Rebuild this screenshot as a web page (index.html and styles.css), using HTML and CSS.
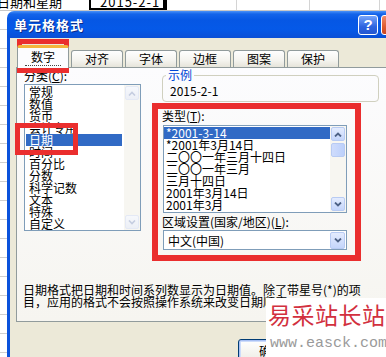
FILE: index.html
```html
<!DOCTYPE html>
<html lang="zh-CN">
<head>
<meta charset="utf-8">
<title>单元格格式</title>
<link rel="stylesheet" href="styles.css">
</head>
<body>
<div class="sheet-row">
  <div class="cell c1"><span>日期和星期</span></div>
  <div class="cell c2"><span>2015-2-1</span></div>
  <div class="cell c3"></div>
  <div class="cell c4"></div>
  <div class="cell c5"></div>
  <div class="cell c6"></div>
</div>
<div class="sheet-body">
  <div class="gutter"></div>
  <div class="dialog">
    <div class="titlebar">
      <span class="title">单元格格式</span>
      <span class="tb-help">?</span>
      <span class="tb-close"></span>
    </div>
    <div class="dlg-body">
      <div class="tabs">
        <div class="tab active"><span class="focus">数字</span></div>
        <div class="tab">对齐</div>
        <div class="tab">字体</div>
        <div class="tab">边框</div>
        <div class="tab">图案</div>
        <div class="tab">保护</div>
      </div>
      <div class="panel">
        <div class="panel-main">
          <div class="col-left">
            <div class="lbl">分类(<u>C</u>):</div>
            <div class="listbox cat">
              <ul class="items">
                <li>常规</li>
                <li>数值</li>
                <li>货币</li>
                <li>会计专用</li>
                <li class="sel">日期</li>
                <li>时间</li>
                <li>百分比</li>
                <li>分数</li>
                <li>科学记数</li>
                <li>文本</li>
                <li>特殊</li>
                <li>自定义</li>
              </ul>
              <div class="vscroll disabled">
                <span class="sbtn"><svg width="8" height="5" viewBox="0 0 8 5"><path d="M1 4.5L4 1.5L7 4.5" fill="none" stroke-width="1.6"/></svg></span>
                <span class="track"></span>
                <span class="sbtn"><svg width="8" height="5" viewBox="0 0 8 5"><path d="M1 0.5L4 3.5L7 0.5" fill="none" stroke-width="1.6"/></svg></span>
              </div>
            </div>
          </div>
          <div class="col-right">
            <fieldset class="sample">
              <legend>示例</legend>
              <div class="sample-val">2015-2-1</div>
            </fieldset>
            <div class="lbl lbl-type">类型(<u>T</u>):</div>
            <div class="listbox type">
              <ul class="items">
                <li class="sel">*2001-3-14</li>
                <li>*2001年3月14日</li>
                <li>二〇〇一年三月十四日</li>
                <li>二〇〇一年三月</li>
                <li>三月十四日</li>
                <li>2001年3月14日</li>
                <li>2001年3月</li>
              </ul>
              <div class="vscroll">
                <span class="sbtn"><svg width="8" height="5" viewBox="0 0 8 5"><path d="M1 4.5L4 1.5L7 4.5" fill="none" stroke-width="1.8"/></svg></span>
                <span class="thumb"></span>
                <span class="track"></span>
                <span class="sbtn"><svg width="8" height="5" viewBox="0 0 8 5"><path d="M1 0.5L4 3.5L7 0.5" fill="none" stroke-width="1.8"/></svg></span>
              </div>
            </div>
            <div class="lbl lbl-locale">区域设置(国家/地区)(<u>L</u>):</div>
            <div class="combo">
              <span class="combo-text">中文(中国)</span>
              <span class="sbtn"><svg width="8" height="5" viewBox="0 0 8 5"><path d="M1 0.5L4 3.5L7 0.5" fill="none" stroke-width="1.8"/></svg></span>
            </div>
          </div>
        </div>
        <p class="desc">日期格式把日期和时间系列数显示为日期值。除了带星号(*)的项<br>目，应用的格式不会按照操作系统来改变日期顺序。</p>
      </div>
      <div class="buttons">
        <button class="btn default">确定</button>
        <button class="btn">取消</button>
      </div>
    </div>
  </div>
</div>

<div class="mark m-tab"></div>
<div class="mark m-date"></div>
<div class="mark m-type"></div>

<div class="watermark">
  <div class="wm-cn">易采站长站</div>
  <div class="wm-en">www.easck.com</div>
</div>
</body>
</html>
```
FILE: styles.css
```css
* { box-sizing: border-box; }
html, body { margin: 0; padding: 0; }
body {
  width: 386px;
  height: 357px;
  overflow: hidden;
  position: relative;
  background: #fff;
  font-family: "Noto Sans CJK SC", "Liberation Sans", sans-serif;
  font-size: 12px;
  color: #000;
}

/* spreadsheet behind the dialog */
.sheet-row {
  display: flex;
  height: 11px;
  border-bottom: 1px solid #c8c8c8;
  overflow: hidden;
}
.cell {
  flex: none;
  height: 10px;
  border-right: 1px solid #d4d4d4;
  overflow: hidden;
  white-space: nowrap;
}
.cell span { display: block; line-height: 14px; margin-top: -5px; }
.c1 { width: 89px; border-right: none; font-size: 13px; }
.c1 span { margin-left: -3px; }
.c2 {
  width: 78px;
  border: 2px solid #000;
  border-top: none;
  border-right-width: 4px;
  font-size: 13px;
}
.c2 span { padding-left: 9px; letter-spacing: 1px; }
.c3 { width: 70px; }
.c4 { width: 73px; }
.c5 { width: 70px; }
.c6 { flex: 1; border-right: none; }

.sheet-body { display: flex; height: 346px; }
.gutter {
  width: 7px;
  flex: none;
  background: repeating-linear-gradient(to bottom, #fff 0 18px, #cfcfcf 18px 19px);
}

/* dialog */
.dialog { width: 400px; flex: none; }
.titlebar {
  height: 27px;
  display: flex;
  align-items: center;
  padding: 0 5px 0 7px;
  border-radius: 7px 7px 0 0;
  background: linear-gradient(to bottom, #4a92f8 0px, #1464ea 3px, #0657e4 9px, #0559e8 18px, #0a4fd6 27px);
}
.title {
  flex: 1;
  color: #fff;
  font-weight: bold;
  font-size: 13px;
  letter-spacing: 1px;
  text-shadow: 1px 1px 0 #0a2a8a;
}
.tb-help {
  width: 20px;
  height: 20px;
  margin-right: 3px;
  border: 1px solid #fff;
  border-radius: 3px;
  background: linear-gradient(to bottom, #78a6fa, #2d63e0 60%, #2457d0);
  color: #fff;
  font: bold 15px/18px "Liberation Sans", sans-serif;
  text-align: center;
}
.tb-close {
  width: 21px;
  height: 20px;
  border: 1px solid #fff;
  border-radius: 3px;
  background: linear-gradient(to bottom, #f08a6a, #df5a30 60%, #c94420);
}

.dlg-body {
  height: 319px;
  border-left: 3px solid #0a52dc;
  border-right: 3px solid #0a52dc;
  background: #ece9d8;
  padding: 7px 6px 0 6px;
}

.tabs {
  display: flex;
  align-items: flex-end;
  gap: 2px;
  padding-left: 1px;
  margin-bottom: -1px;
  position: relative;
  z-index: 1;
}
.tab {
  width: 52px;
  height: 17px;
  margin-bottom: 1px;
  border: 1px solid #919b9c;
  border-bottom: none;
  border-radius: 3px 3px 0 0;
  background: linear-gradient(to bottom, #fefefe, #f4f3ee 60%, #e6e4da);
  text-align: center;
  line-height: 16px;
}
.tab.active {
  height: 23px;
  margin-bottom: 0;
  background: #fcfcfe;
  border-top: 3px solid #f4b43c;
  line-height: 18px;
}
.focus { border-bottom: 1px dotted #444; padding: 0 6px; }

.panel {
  height: 255px;
  border: 1px solid #919b9c;
  background: linear-gradient(to bottom, #fcfcfe, #f6f5f0);
  padding: 0 0 0 7px;
}
.panel-main { display: flex; }
.col-left { width: 117px; flex: none; padding-top: 2px; }
.col-right { width: 217px; flex: none; margin-left: 21px; }
.lbl { height: 12px; line-height: 12px; white-space: nowrap; }
.col-left .lbl { margin-bottom: 2px; }

.listbox {
  display: flex;
  border: 1px solid #7f9db9;
  background: #fff;
}
.cat { height: 147px; }
.items {
  flex: 1;
  list-style: none;
  margin: 0;
  padding: 1px 2px 0 1px;
  overflow: hidden;
}
.items li {
  height: 12px;
  line-height: 12px;
  padding-left: 3px;
  white-space: nowrap;
}
.items li.sel { background: #316ac5; color: #fff; }

.vscroll {
  width: 16px;
  flex: none;
  display: flex;
  flex-direction: column;
  padding: 1px;
  background: #f7f6f1;
}
.vscroll .track { flex: 1; }
.sbtn {
  flex: none;
  width: 14px;
  height: 14px;
  display: flex;
  align-items: center;
  justify-content: center;
  border: 1px solid #b8cbf3;
  border-radius: 2px;
  background: linear-gradient(to bottom, #e4ecfe, #c4d5fb);
}
.sbtn path { stroke: #4d6185; }
.thumb {
  flex: none;
  height: 14px;
  margin-top: 2px;
  border: 1px solid #b8cbf3;
  border-radius: 2px;
  background: linear-gradient(to right, #cfdcfc, #bcd0fb);
}
.vscroll.disabled .sbtn {
  border-color: #e4e9f5;
  background: linear-gradient(to bottom, #f6f8fc, #eceff6);
}
.vscroll.disabled .sbtn path { stroke: #c5cde0; }

.sample {
  width: 217px;
  margin: 1px 0 0 0;
  padding: 0 0 4px 3px;
  min-width: 0;
  border: 1px solid #d0d0bf;
  border-radius: 4px;
}
.sample legend {
  padding: 0 2px;
  line-height: 12px;
  color: #0046d5;
}
.sample-val { margin-top: 4px; padding-left: 4px; line-height: 12px; }

.lbl-type { margin-top: 8px; }
.type { width: 184px; height: 88px; margin-left: 1px; margin-top: 3px; }
.type .items { padding: 1px 0 0 0; }
.type .items li { padding-left: 2px; }
.lbl-locale { margin-top: 3px; }
.combo {
  width: 184px;
  height: 20px;
  margin: 2px 0 0 1px;
  display: flex;
  align-items: center;
  border: 1px solid #7f9db9;
  background: #fff;
  padding: 0 1px 0 4px;
}
.combo-text { flex: 1; }
.combo .sbtn { height: 17px; width: 15px; }

.desc {
  margin: 34px 0 0 -1px;
  line-height: 12px;
  white-space: nowrap;
}

.buttons {
  display: flex;
  justify-content: flex-end;
  gap: 6px;
  margin-top: 17px;
  padding-right: 22px;
}
.btn {
  width: 66px;
  height: 23px;
  padding: 0;
  border: 1px solid #003c74;
  border-radius: 3px;
  background: linear-gradient(to bottom, #ffffff, #f1f0ea 80%, #d8d2c6);
  font: 12px "Noto Sans CJK SC", sans-serif;
  color: #000;
}
.btn.default { box-shadow: inset 0 0 0 1px #a8c0f4, inset 0 0 0 2px #cddcfa; }

/* annotation overlays */
.mark {
  position: absolute;
  border: 5px solid #ea2e2e;
}
.m-tab { left: 17px; top: 39px; width: 52px; height: 34px; }
.m-date { left: 15px; top: 123px; width: 63px; height: 32px; }
.m-type { left: 152px; top: 103px; width: 209px; height: 158px; border-width: 6px; }

.watermark {
  position: absolute;
  left: 266px;
  top: 298px;
  width: 120px;
  height: 59px;
  background: #fff;
  overflow: hidden;
}
.wm-cn {
  margin-top: 4px;
  padding-left: 2px;
  font-size: 23px;
  line-height: 24px;
  letter-spacing: 0.5px;
  color: #d2303e;
  white-space: nowrap;
}
.wm-en {
  margin-top: 10px;
  padding-left: 4px;
  font-family: "Liberation Mono", monospace;
  font-size: 15px;
  line-height: 15px;
  color: #9a9a9a;
  white-space: nowrap;
}
```
